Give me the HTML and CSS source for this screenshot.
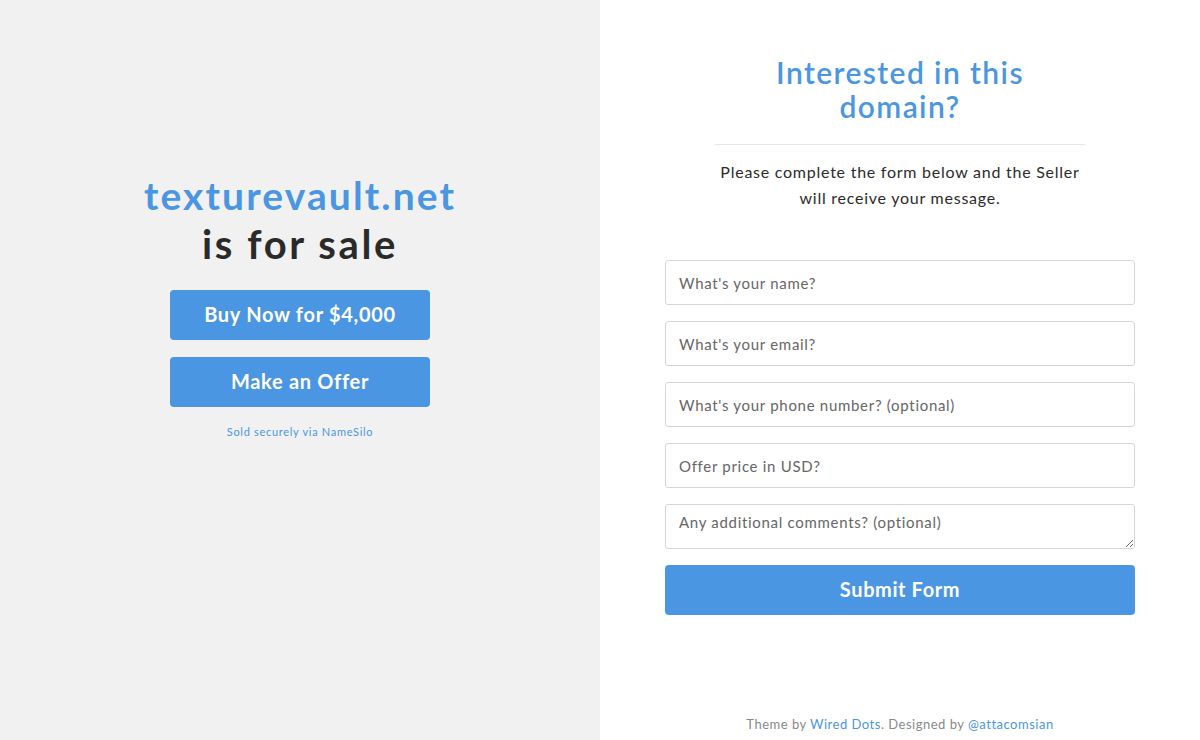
FILE: index.html
```html
<!DOCTYPE html>
<html lang="en">
<head>
<meta charset="utf-8">
<title>texturevault.net is for sale</title>
<link rel="stylesheet" href="styles.css">
</head>
<body>
<div class="page">
  <section class="left">
    <div class="sale">
      <h1 class="domain">texturevault.net</h1>
      <h2 class="forsale">is for sale</h2>
      <a class="btn btn-buy" href="#">Buy Now for $4,000</a>
      <a class="btn btn-offer" href="#">Make an Offer</a>
      <p class="secure">Sold securely via NameSilo</p>
    </div>
  </section>
  <section class="right">
    <div class="intro">
      <h2 class="title">Interested in this domain?</h2>
      <hr class="rule">
      <p class="lead">Please complete the form below and the Seller will receive your message.</p>
    </div>
    <form class="form">
      <input class="field" type="text" placeholder="What's your name?">
      <input class="field" type="email" placeholder="What's your email?">
      <input class="field" type="text" placeholder="What's your phone number? (optional)">
      <input class="field" type="text" placeholder="Offer price in USD?">
      <textarea class="field area" placeholder="Any additional comments? (optional)"></textarea>
      <button class="btn submit" type="button">Submit Form</button>
    </form>
    <footer class="foot">Theme by <a href="#">Wired Dots</a>. Designed by <a href="#">@attacomsian</a></footer>
  </section>
</div>
</body>
</html>
```
FILE: styles.css
```css
* { box-sizing: border-box; }
html, body { margin: 0; padding: 0; }
body {
  font-family: "Lato", "Noto Sans", sans-serif;
  color: #2b2b2b;
  width: 1200px;
  height: 740px;
  overflow: hidden;
}
.page {
  display: grid;
  grid-template-columns: 600px 600px;
  height: 740px;
}
.left {
  background: #f1f1f1;
  display: flex;
  justify-content: center;
}
.sale {
  padding-top: 172px;
  width: 260px;
  display: flex;
  flex-direction: column;
  align-items: center;
}
.domain {
  margin: 0;
  color: #4a96e2;
  font-size: 39px;
  font-weight: 700;
  line-height: 46px;
  white-space: nowrap;
  letter-spacing: 2.1px;
}
.forsale {
  margin: 2px 0 0;
  color: #2a2a2a;
  font-size: 40px;
  font-weight: 700;
  line-height: 48px;
  letter-spacing: 2.6px;
}
.btn {
  display: flex;
  align-items: center;
  justify-content: center;
  width: 260px;
  height: 50px;
  background: #4a96e2;
  color: #fff;
  border: 0;
  border-radius: 4px;
  text-decoration: none;
  font-family: inherit;
  font-weight: 700;
  font-size: 20px;
  letter-spacing: 0.7px;
  padding-bottom: 3px;
}
.btn-buy { margin-top: 22px; }
.btn-offer { margin-top: 17px; }
.secure {
  margin: 18px 0 0;
  font-size: 11px;
  color: #4a96e2;
  letter-spacing: 0.7px;
}
.right {
  background: #fff;
  display: flex;
  flex-direction: column;
  align-items: center;
  padding-top: 55px;
}
.intro {
  width: 370px;
  display: flex;
  flex-direction: column;
  align-items: center;
  text-align: center;
}
.title {
  margin: 0;
  width: 290px;
  color: #4a96e2;
  font-size: 30px;
  font-weight: 600;
  line-height: 34px;
  letter-spacing: 1.4px;
}
.rule {
  width: 370px;
  margin: 21px 0 0;
  border: 0;
  border-top: 1px solid #e5e5e5;
}
.lead {
  margin: 14px 0 0;
  font-size: 16px;
  line-height: 26px;
  color: #2b2b2b;
  width: 370px;
  letter-spacing: 0.75px;
}
.form {
  width: 470px;
  margin-top: 49px;
  display: flex;
  flex-direction: column;
  gap: 16px;
}
.field {
  width: 470px;
  height: 45px;
  border: 1px solid #d6d6d6;
  border-radius: 3px;
  padding: 0 13px;
  font-family: inherit;
  font-size: 15px;
  letter-spacing: 0.7px;
  color: #555;
  background: #fff;
}
.field::placeholder { color: #666; }
.area {
  padding-top: 8px;
  resize: vertical;
  display: block;
}
.submit { width: 470px; font-size: 20px; letter-spacing: 0.6px; }
.foot {
  margin-top: auto;
  padding-bottom: 8px;
  font-size: 13px;
  color: #888;
  letter-spacing: 0.5px;
}
.foot a { color: #4a96e2; text-decoration: none; }
```
